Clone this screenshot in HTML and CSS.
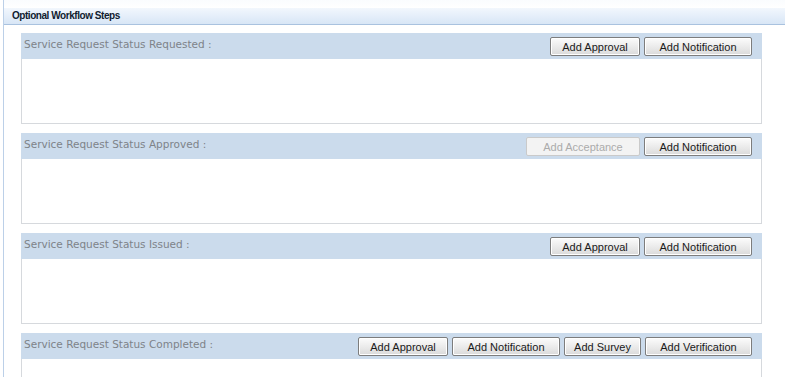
FILE: index.html
```html
<!DOCTYPE html>
<html lang="en">
<head>
  <meta charset="UTF-8">
  <title>Optional Workflow Steps</title>
  <link rel="stylesheet" href="styles.css">
</head>
<body>
  <div class="panel">
    <div class="panel-title">Optional Workflow Steps</div>
    <div class="steps">
      <div class="step">
        <div class="step-head">
          <span class="step-label">Service Request Status Requested :</span>
          <div class="step-actions">
            <button class="btn btn-approval">Add Approval</button>
            <button class="btn btn-notify">Add Notification</button>
          </div>
        </div>
        <div class="step-body"></div>
      </div>
      <div class="step">
        <div class="step-head">
          <span class="step-label">Service Request Status Approved :</span>
          <div class="step-actions">
            <button class="btn btn-accept" disabled>Add Acceptance</button>
            <button class="btn btn-notify">Add Notification</button>
          </div>
        </div>
        <div class="step-body"></div>
      </div>
      <div class="step">
        <div class="step-head">
          <span class="step-label">Service Request Status Issued :</span>
          <div class="step-actions">
            <button class="btn btn-approval">Add Approval</button>
            <button class="btn btn-notify">Add Notification</button>
          </div>
        </div>
        <div class="step-body"></div>
      </div>
      <div class="step">
        <div class="step-head">
          <span class="step-label">Service Request Status Completed :</span>
          <div class="step-actions">
            <button class="btn btn-approval">Add Approval</button>
            <button class="btn btn-notify">Add Notification</button>
            <button class="btn btn-survey">Add Survey</button>
            <button class="btn btn-verify">Add Verification</button>
          </div>
        </div>
        <div class="step-body"></div>
      </div>
    </div>
  </div>
</body>
</html>
```

FILE: styles.css
```css
body {
  margin: 0;
  background: #fff;
  font-family: "Liberation Sans", Arial, sans-serif;
  overflow: hidden;
}
.panel {
  box-sizing: border-box;
  height: 377px;
  overflow: hidden;
  margin-left: 3px;
  padding-top: 8px;
  border-left: 1px solid #bcd0e8;
  background: linear-gradient(#fafcfe, #fff 8px);
}
.panel-title {
  height: 16px;
  line-height: 16px;
  padding-left: 8px;
  font-size: 10px;
  letter-spacing: -0.45px;
  font-weight: bold;
  color: #101c30;
  background: linear-gradient(#f2f7fd, #d8e6f6);
  border-bottom: 1px solid #a9c2df;
}
.steps {
  padding: 8px 0 0 17px;
  width: 741px;
  display: flex;
  flex-direction: column;
  gap: 9px;
}
.step-head {
  height: 26px;
  display: flex;
  align-items: flex-start;
  justify-content: space-between;
  padding: 0 10px 0 3px;
  background: #cbdbec;
}
.step-label {
  font-family: Verdana, "DejaVu Sans", sans-serif;
  font-size: 10.5px;
  color: #7e8389;
  margin-top: 5px;
}
.step-actions {
  display: flex;
  gap: 4px;
  margin-top: 4px;
}
.btn {
  height: 19px;
  padding: 0;
  font-family: "Liberation Sans", Arial, sans-serif;
  font-size: 11px;
  color: #1a1a1a;
  background: linear-gradient(#fcfcfc, #e8e8e8 60%, #dadada);
  border: 1px solid #7d7d7d;
  border-radius: 2px;
  box-shadow: inset 0 0 0 1px #fff;
}
.btn:disabled {
  color: #ababab;
  background: #f3f3f3;
  border-color: #cacaca;
  box-shadow: none;
}
.btn-approval { width: 90px; }
.btn-notify { width: 108px; }
.btn-accept { width: 114px; }
.btn-survey { width: 77px; }
.btn-verify { width: 107px; }
.step-body {
  height: 64px;
  background: #fff;
  border: 1px solid #d6d9dd;
  border-top: none;
}
```
